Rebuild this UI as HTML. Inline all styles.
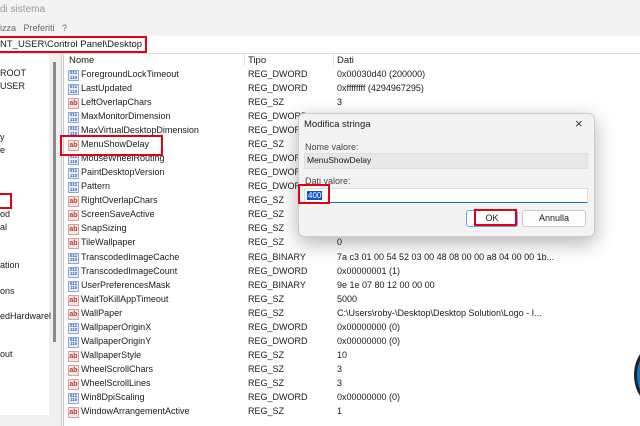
<!DOCTYPE html><html><head><style>
body{margin:0;width:640px;height:426px;overflow:hidden;background:#fff;font-family:"Liberation Sans",sans-serif;font-size:9px;color:#1a1a1a;position:relative}
.a{position:absolute;white-space:nowrap}
.ic{position:absolute;width:11px;height:11px;font-weight:bold;text-align:center;box-sizing:border-box;overflow:hidden}
.sz{background:#f4e8e6;color:#c0392b;border:1px solid #d8a0a0;font-size:7px;line-height:9px}
.dw{background:#e8eef8;color:#3060b0;border:1px solid #8aa8d8;font-size:4.5px;line-height:4.5px}
.red{position:absolute;border:2px solid #e3001b;box-sizing:border-box}
</style></head><body>
<div class="a" style="left:0;top:0;width:640px;height:20px;background:#f3f3f3"></div>
<div class="a" style="left:0;top:4px;color:#999;font-size:10px">di sistema</div>
<div class="a" style="left:0;top:20px;width:640px;height:16px;background:#f3f3f3"></div>
<div class="a" style="left:0;top:23px;color:#666;font-size:9px">izza &nbsp;&nbsp;Preferiti &nbsp;&nbsp;?</div>
<div class="a" style="left:0;top:36px;width:640px;height:17px;background:#fff;border-bottom:1px solid #ddd"></div>
<div class="a" style="left:0;top:39px;font-size:9.5px">NT_USER\Control Panel\Desktop</div>
<div class="red" style="left:-3px;top:36px;width:150px;height:17px"></div>
<div class="a" style="left:0;top:415px;width:62px;height:11px;background:#f0f0f0"></div>
<div class="a" style="left:49px;top:54px;width:13px;height:362px;background:#f0f0f0"></div>
<div class="a" style="left:53px;top:62px;width:3px;height:280px;background:#8a8a8a"></div>
<div class="a" style="left:61px;top:54px;width:1px;height:372px;background:#ccc"></div>
<div class="a" style="left:63px;top:54px;width:1px;height:372px;background:#ccc"></div>
<div class="a" style="left:0;top:67px;line-height:13px">ROOT<br>USER</div>
<div class="a" style="left:0;top:131px;line-height:13px">y<br>e</div>
<div class="red" style="left:-4px;top:193px;width:16px;height:16px"></div>
<div class="a" style="left:0;top:208px;line-height:13px">od<br>al</div>
<div class="a" style="left:0;top:260px">ation</div>
<div class="a" style="left:0;top:286px">ons</div>
<div class="a" style="left:0;top:311px">edHardwarel</div>
<div class="a" style="left:0;top:349px">out</div>
<div class="a" style="left:69px;top:55px;font-size:9.5px">Nome</div>
<div class="a" style="left:248px;top:55px;font-size:9.5px">Tipo</div>
<div class="a" style="left:337px;top:55px;font-size:9.5px">Dati</div>
<div class="a" style="left:244px;top:54px;width:1px;height:12px;background:#e5e5e5"></div>
<div class="a" style="left:333px;top:54px;width:1px;height:12px;background:#e5e5e5"></div>
<div id="rows"></div>
<script>
var r=[["d","ForegroundLockTimeout","REG_DWORD","0x00030d40 (200000)"],["d","LastUpdated","REG_DWORD","0xffffffff (4294967295)"],["s","LeftOverlapChars","REG_SZ","3"],["d","MaxMonitorDimension","REG_DWORD",""],["d","MaxVirtualDesktopDimension","REG_DWORD",""],["s","MenuShowDelay","REG_SZ",""],["d","MouseWheelRouting","REG_DWORD",""],["d","PaintDesktopVersion","REG_DWORD",""],["d","Pattern","REG_DWORD",""],["s","RightOverlapChars","REG_SZ",""],["s","ScreenSaveActive","REG_SZ",""],["s","SnapSizing","REG_SZ",""],["s","TileWallpaper","REG_SZ","0"],["d","TranscodedImageCache","REG_BINARY","7a c3 01 00 54 52 03 00 48 08 00 00 a8 04 00 00 1b..."],["d","TranscodedImageCount","REG_DWORD","0x00000001 (1)"],["d","UserPreferencesMask","REG_BINARY","9e 1e 07 80 12 00 00 00"],["s","WaitToKillAppTimeout","REG_SZ","5000"],["s","WallPaper","REG_SZ","C:\\Users\\roby-\\Desktop\\Desktop Solution\\Logo - I..."],["d","WallpaperOriginX","REG_DWORD","0x00000000 (0)"],["d","WallpaperOriginY","REG_DWORD","0x00000000 (0)"],["s","WallpaperStyle","REG_SZ","10"],["s","WheelScrollChars","REG_SZ","3"],["s","WheelScrollLines","REG_SZ","3"],["d","Win8DpiScaling","REG_DWORD","0x00000000 (0)"],["s","WindowArrangementActive","REG_SZ","1"]];
var h="";r.forEach(function(x,i){var y=69+i*14.04;
var cls=x[0]=="s"?"sz":"dw";var txt=x[0]=="s"?"ab":"011<br>110";
h+='<div class="ic '+cls+'" style="left:68px;top:'+(y+1)+'px">'+txt+'</div>';
h+='<div class="a" style="left:81px;top:'+y+'px">'+x[1]+'</div><div class="a" style="left:248px;top:'+y+'px">'+x[2]+'</div><div class="a" style="left:337px;top:'+y+'px">'+x[3]+'</div>';});
document.getElementById("rows").innerHTML=h;
</script>
<div class="red" style="left:60px;top:135px;width:103px;height:21px"></div>
<div class="a" style="left:298px;top:113px;width:295px;height:122px;background:#f3f3f3;border:1px solid #ccc;border-radius:6px;box-shadow:0 6px 20px rgba(0,0,0,.3)"></div>
<div class="a" style="left:304px;top:119px;font-size:9.5px">Modifica stringa</div>
<div class="a" style="left:575px;top:116px;font-size:13px;color:#333">×</div>
<div class="a" style="left:305px;top:142px;color:#444">Nome valore:</div>
<div class="a" style="left:304px;top:153px;width:282px;height:14px;background:#e8e8e8;border:1px solid #e0e0e0"></div>
<div class="a" style="left:307px;top:155px;font-size:8.5px">MenuShowDelay</div>
<div class="a" style="left:305px;top:176px;color:#444">Dati valore:</div>
<div class="a" style="left:304px;top:188px;width:282px;height:13px;background:#fff;border:1px solid #ddd;border-bottom:1.5px solid #1a6fc0"></div>
<div class="a" style="left:307px;top:191px;background:#0a58c9;color:#fff;font-size:8px;line-height:9px;padding:0 1px">400</div>
<div class="red" style="left:298px;top:184px;width:32px;height:20px"></div>
<div class="a" style="left:466px;top:210px;width:50px;height:15px;background:#fff;border:1px solid #6aa3dd;border-radius:3px;text-align:center;line-height:15px">OK</div>
<div class="red" style="left:474px;top:209px;width:43px;height:17px"></div>
<div class="a" style="left:522px;top:210px;width:62px;height:15px;background:#fdfdfd;border:1px solid #ccc;border-radius:3px;text-align:center;line-height:15px">Annulla</div>
<div class="a" style="left:634px;top:344px;width:40px;height:56px;border-radius:50%;background:#1577c7;border:3px solid #222"></div>
</body></html>
